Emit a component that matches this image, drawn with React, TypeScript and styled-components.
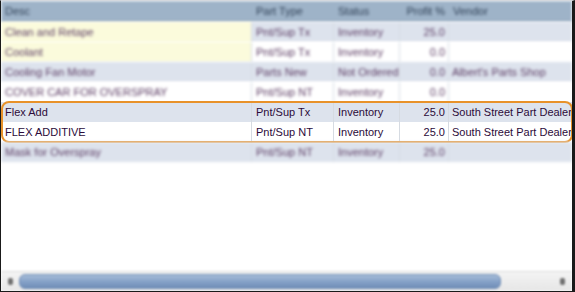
import styled, { createGlobalStyle, css } from 'styled-components';

type Part = {
  desc: string;
  partType: string;
  status: string;
  profit: string;
  vendor: string;
  flagged?: boolean;
  selected?: boolean;
};

const parts: Part[] = [
  { desc: 'Clean and Retape', partType: 'Pnt/Sup Tx', status: 'Inventory', profit: '25.0', vendor: '', flagged: true },
  { desc: 'Coolant', partType: 'Pnt/Sup Tx', status: 'Inventory', profit: '0.0', vendor: '', flagged: true },
  { desc: 'Cooling Fan Motor', partType: 'Parts New', status: 'Not Ordered', profit: '0.0', vendor: "Albert's Parts Shop" },
  { desc: 'COVER CAR FOR OVERSPRAY', partType: 'Pnt/Sup NT', status: 'Inventory', profit: '0.0', vendor: '' },
  { desc: 'Flex Add', partType: 'Pnt/Sup Tx', status: 'Inventory', profit: '25.0', vendor: 'South Street Part Dealer', selected: true },
  { desc: 'FLEX ADDITIVE', partType: 'Pnt/Sup NT', status: 'Inventory', profit: '25.0', vendor: 'South Street Part Dealer', selected: true },
  { desc: 'Mask for Overspray', partType: 'Pnt/Sup NT', status: 'Inventory', profit: '25.0', vendor: '' },
];

const GlobalStyle = createGlobalStyle`
  html, body {
    margin: 0;
    padding: 0;
    background: #ffffff;
  }
  body {
    font-family: 'Liberation Sans', Arial, sans-serif;
  }
`;

const COLUMNS = '251px 82px 66px 49px 1fr';

const Frame = styled.div`
  box-sizing: border-box;
  width: 575px;
  height: 292px;
  display: flex;
  flex-direction: column;
  border-left: 1px solid #1a1a1a;
  border-right: 3px solid #1a1a1a;
  border-bottom: 1px solid #1a1a1a;
  border-top: 1px solid #d4d8de;
  background: #ffffff;
  overflow: hidden;
`;

const Header = styled.div`
  display: grid;
  grid-template-columns: ${COLUMNS};
  height: 20px;
  background: #9eb3c8;
  border-bottom: 1px solid #8fa3b9;
  filter: blur(1.4px);
`;

const HeaderCell = styled.div<{ $right?: boolean }>`
  display: flex;
  align-items: center;
  justify-content: ${(p) => (p.$right ? 'flex-end' : 'flex-start')};
  padding: 0 4px;
  font-size: 11px;
  color: #2e3f55;
  white-space: nowrap;
`;

const Body = styled.div`
  display: flex;
  flex-direction: column;
`;

const Selection = styled.div`
  position: relative;
  display: flex;
  flex-direction: column;

  &::after {
    content: '';
    position: absolute;
    top: -1px;
    bottom: -1px;
    left: 0;
    right: -1px;
    border: 2px solid #e8922a;
    border-radius: 8px;
    pointer-events: none;
  }
`;

const Row = styled.div<{ $odd: boolean; $blur: boolean }>`
  display: grid;
  grid-template-columns: ${COLUMNS};
  height: 20px;
  background: ${(p) => (p.$odd ? '#dde3ed' : '#ffffff')};
  ${(p) =>
    p.$blur &&
    css`
      filter: blur(1.4px);
    `}
`;

const Cell = styled.div<{ $right?: boolean; $flagged?: boolean; $dim?: boolean }>`
  display: flex;
  align-items: center;
  justify-content: ${(p) => (p.$right ? 'flex-end' : 'flex-start')};
  padding: 0 3px 0 4px;
  border-right: 1px solid #d6dbe2;
  font-size: 11px;
  color: ${(p) => (p.$dim ? '#5a3a62' : '#2c0b3a')};
  white-space: nowrap;
  overflow: hidden;
  background: ${(p) => (p.$flagged ? '#fbfbdc' : 'transparent')};

  &:last-child {
    border-right: none;
    padding: 0 0 0 3px;
  }
`;

const Empty = styled.div`
  flex: 1;
`;

const ScrollBar = styled.div`
  display: flex;
  align-items: center;
  height: 19px;
  padding: 0 1px;
  background: linear-gradient(#f4f4f4, #e6e6e6);
  border-top: 1px solid #dcdcdc;
  filter: blur(0.8px);
`;

const Arrow = styled.div`
  width: 17px;
  height: 17px;
  display: flex;
  align-items: center;
  justify-content: center;

  &::before {
    content: '';
    width: 5px;
    height: 7px;
    border-radius: 2px;
    background: #6f6f6f;
  }
`;

const Track = styled.div`
  flex: 1;
  height: 15px;
  display: flex;
  align-items: center;
`;

const Thumb = styled.div`
  height: 15px;
  border-radius: 6px;
  background: linear-gradient(#a6bcd8, #86a2c8 50%, #6f8db7);
  border: 1px solid #7590b6;
  box-sizing: border-box;
`;

function PartRow({ part, index }: { part: Part; index: number }) {
  const dim = !part.selected;
  return (
    <Row $odd={index % 2 === 0} $blur={!part.selected}>
      <Cell $flagged={part.flagged} $dim={dim}>{part.desc}</Cell>
      <Cell $dim={dim}>{part.partType}</Cell>
      <Cell $dim={dim}>{part.status}</Cell>
      <Cell $right $dim={dim}>{part.profit}</Cell>
      <Cell $dim={dim}>{part.vendor}</Cell>
    </Row>
  );
}

export default function App() {
  const before = parts.slice(0, 4);
  const chosen = parts.slice(4, 6);
  const after = parts.slice(6);

  return (
    <>
      <GlobalStyle />
      <Frame>
        <Header>
          <HeaderCell>Desc</HeaderCell>
          <HeaderCell>Part Type</HeaderCell>
          <HeaderCell>Status</HeaderCell>
          <HeaderCell $right>Profit %</HeaderCell>
          <HeaderCell>Vendor</HeaderCell>
        </Header>
        <Body>
          {before.map((p, i) => (
            <PartRow key={p.desc} part={p} index={i} />
          ))}
          <Selection>
            {chosen.map((p, i) => (
              <PartRow key={p.desc} part={p} index={i + 4} />
            ))}
          </Selection>
          {after.map((p, i) => (
            <PartRow key={p.desc} part={p} index={i + 6} />
          ))}
        </Body>
        <Empty />
        <ScrollBar>
          <Arrow />
          <Track>
            <Thumb style={{ width: `${(481 / 534) * 100}%` }} />
          </Track>
          <Arrow />
        </ScrollBar>
      </Frame>
    </>
  );
}
